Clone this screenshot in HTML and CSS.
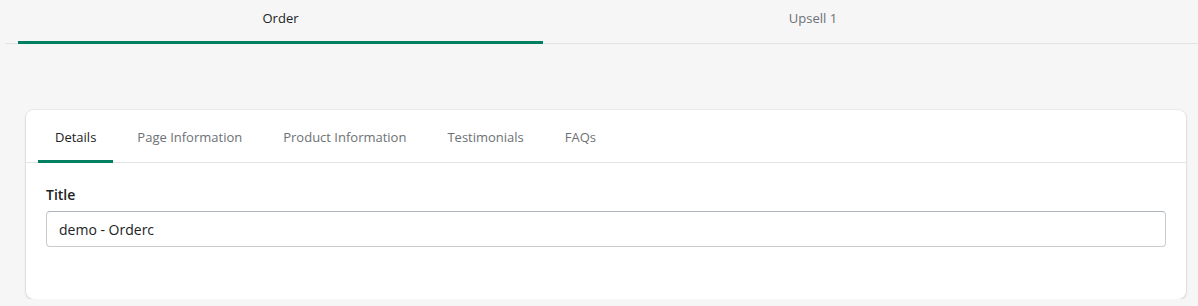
FILE: index.html
```html
<!DOCTYPE html>
<html>
<head>
<meta charset="utf-8">
<link rel="stylesheet" href="styles.css">
</head>
<body>
<nav class="top-tabs">
  <div class="top-tab active tab-order">Order</div>
  <div class="top-tab tab-upsell">Upsell 1</div>
</nav>
<section class="card">
  <nav class="inner-tabs">
    <div class="inner-tab active">Details</div>
    <div class="inner-tab">Page Information</div>
    <div class="inner-tab">Product Information</div>
    <div class="inner-tab">Testimonials</div>
    <div class="inner-tab">FAQs</div>
  </nav>
  <div class="card-body">
    <label class="field-label" for="title">Title</label>
    <input id="title" class="field-input" type="text" value="demo - Orderc">
  </div>
</section>
</body>
</html>
```
FILE: styles.css
```css
html, body {
  margin: 0;
  padding: 0;
  background: #f6f6f7;
  font-family: "Open Sans", "Noto Sans", sans-serif;
  color: #202223;
}
.top-tabs {
  display: flex;
  margin-left: 5px;
  padding-left: 13px;
  height: 44px;
  box-shadow: inset 0 -1px 0 #e1e3e5;
}
.top-tab {
  height: 44px;
  box-sizing: border-box;
  padding-top: 9px;
  line-height: 18px;
  font-size: 13px;
  text-align: center;
  color: #6d7175;
}
.tab-order { width: 525px; }
.tab-upsell { width: 540px; }
.top-tab.active {
  color: #202223;
  box-shadow: inset 0 -3px 0 #008060;
}
.card {
  margin: 66px 12px 0 26px;
  background: #fff;
  border-radius: 8px;
  box-shadow: 0 0 0 1px rgba(63,63,68,0.04), 0 1px 3px rgba(63,63,68,0.18);
}
.inner-tabs {
  display: flex;
  gap: 7px;
  padding-left: 12px;
  height: 53px;
  box-shadow: inset 0 -1px 0 #e1e3e5;
}
.inner-tab {
  height: 53px;
  box-sizing: border-box;
  padding: 17px 17px 0;
  line-height: 20px;
  font-size: 13px;
  color: #6d7175;
}
.inner-tab.active {
  color: #202223;
  box-shadow: inset 0 -3px 0 #008060;
  border-radius: 0 0 0 0;
}
.card-body {
  padding: 22px 20px 52px;
}
.field-label {
  display: block;
  font-size: 14px;
  font-weight: 600;
  line-height: 20px;
  margin-bottom: 6px;
}
.field-input {
  display: block;
  width: 100%;
  box-sizing: border-box;
  height: 36px;
  padding: 0 12px;
  border: 1px solid #c9cccf;
  border-top-color: #aeb4b9;
  border-radius: 4px;
  font-family: inherit;
  font-size: 14px;
  color: #202223;
  background: #fff;
  outline: none;
}
```
